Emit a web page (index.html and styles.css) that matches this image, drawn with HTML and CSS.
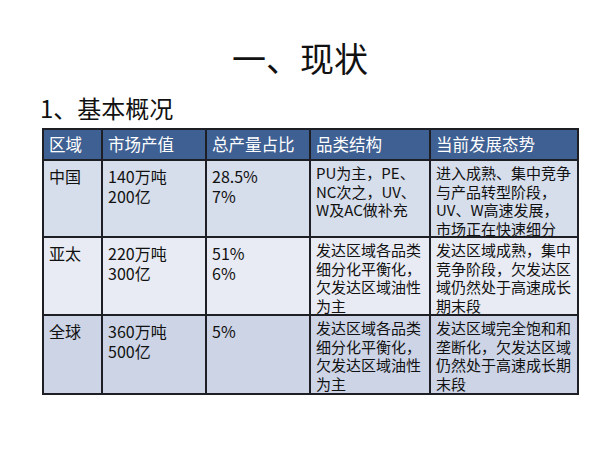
FILE: index.html
```html
<!DOCTYPE html>
<html lang="zh-CN">
<head>
<meta charset="utf-8">
<link rel="stylesheet" href="styles.css">
</head>
<body>
<div class="slide">
  <h1 class="title">一、现状</h1>
  <h2 class="subtitle">1、基本概况</h2>
  <table class="grid">
    <colgroup>
      <col class="c1"><col class="c2"><col class="c3"><col class="c4"><col class="c5">
    </colgroup>
    <thead>
      <tr><th>区域</th><th>市场产值</th><th>总产量占比</th><th>品类结构</th><th>当前发展态势</th></tr>
    </thead>
    <tbody>
      <tr class="band1">
        <td><div class="ln">中国</div></td>
        <td><div class="ln">140万吨</div><div class="ln">200亿</div></td>
        <td><div class="ln">28.5%</div><div class="ln">7%</div></td>
        <td class="sm"><div class="txt"><div>PU为主，PE、</div><div>NC次之，UV、</div><div>W及AC做补充</div></div></td>
        <td class="sm"><div class="txt"><div>进入成熟、集中竞争</div><div>与产品转型阶段，</div><div>UV、W高速发展，</div><div>市场正在快速细分</div></div></td>
      </tr>
      <tr class="band2">
        <td><div class="ln">亚太</div></td>
        <td><div class="ln">220万吨</div><div class="ln">300亿</div></td>
        <td><div class="ln">51%</div><div class="ln">6%</div></td>
        <td class="sm"><div class="txt"><div>发达区域各品类</div><div>细分化平衡化，</div><div>欠发达区域油性</div><div>为主</div></div></td>
        <td class="sm"><div class="txt"><div>发达区域成熟，集中</div><div>竞争阶段，欠发达区</div><div>域仍然处于高速成长</div><div>期末段</div></div></td>
      </tr>
      <tr class="band3">
        <td><div class="ln">全球</div></td>
        <td><div class="ln">360万吨</div><div class="ln">500亿</div></td>
        <td><div class="ln">5%</div></td>
        <td class="sm"><div class="txt"><div>发达区域各品类</div><div>细分化平衡化，</div><div>欠发达区域油性</div><div>为主</div></div></td>
        <td class="sm"><div class="txt"><div>发达区域完全饱和和</div><div>垄断化，欠发达区域</div><div>仍然处于高速成长期</div><div>末段</div></div></td>
      </tr>
    </tbody>
  </table>
</div>
</body>
</html>
```
FILE: styles.css
```css
html, body {
  margin: 0;
  padding: 0;
  background: #ffffff;
}
.slide {
  width: 600px;
  height: 450px;
  font-family: "Noto Sans CJK SC", "Noto Sans", sans-serif;
  color: #111;
  padding-top: 36px;
  box-sizing: border-box;
}
.title {
  margin: 0;
  text-align: center;
  font-size: 34px;
  font-weight: normal;
  line-height: 44px;
}
.subtitle {
  margin: 12px 0 0 40px;
  font-size: 24px;
  font-weight: normal;
  line-height: 32px;
}
.grid {
  margin: 4px 0 0 42px;
  border-collapse: collapse;
  width: 535px;
  table-layout: fixed;
}
.c1 { width: 59px; }
.c2 { width: 104px; }
.c3 { width: 104px; }
.c4 { width: 120px; }
.c5 { width: 148px; }
.grid th, .grid td {
  border: 2px solid #1e1f24;
  text-align: left;
  vertical-align: top;
  padding: 5px 5px 0;
  font-weight: normal;
  font-size: 16px;
  line-height: 20px;
}
.grid th {
  background: #3f6092;
  color: #fff;
  font-size: 16.5px;
  padding: 3px 5px 4px;
  line-height: 22px;
}
.grid td.sm {
  font-size: 15px;
  line-height: 18.5px;
  padding: 3px 5px 0;
}
.txt { margin-bottom: -8px; }
.ln { white-space: nowrap; }
.band1 { height: 77px; }
.band2 { height: 78px; }
.band3 { height: 79px; }
.band1 td { background: #d6ddeb; }
.band2 td { background: #e8ebf3; }
.band3 td { background: #ccd4e6; }
```
